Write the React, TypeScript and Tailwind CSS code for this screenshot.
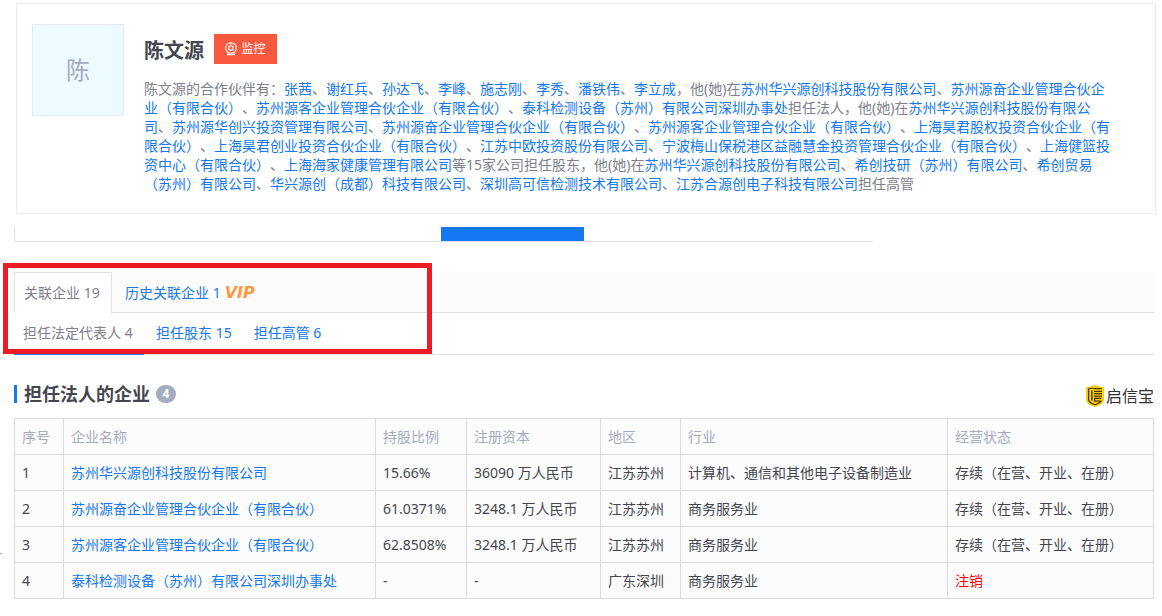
import { Fragment } from 'react';

const partners = ['张茜', '谢红兵', '孙达飞', '李峰', '施志刚', '李秀', '潘铁伟', '李立成'];

const legalCompanies = [
  '苏州华兴源创科技股份有限公司',
  '苏州源奋企业管理合伙企业（有限合伙）',
  '苏州源客企业管理合伙企业（有限合伙）',
  '泰科检测设备（苏州）有限公司深圳办事处',
];

const shareholderCompanies = [
  '苏州华兴源创科技股份有限公司',
  '苏州源华创兴投资管理有限公司',
  '苏州源奋企业管理合伙企业（有限合伙）',
  '苏州源客企业管理合伙企业（有限合伙）',
  '上海昊君股权投资合伙企业（有限合伙）',
  '上海昊君创业投资合伙企业（有限合伙）',
  '江苏中欧投资股份有限公司',
  '宁波梅山保税港区益融慧金投资管理合伙企业（有限合伙）',
  '上海健篮投资中心（有限合伙）',
  '上海海家健康管理有限公司',
];

const executiveCompanies = [
  '苏州华兴源创科技股份有限公司',
  '希创技研（苏州）有限公司',
  '希创贸易（苏州）有限公司',
  '华兴源创（成都）科技有限公司',
  '深圳高可信检测技术有限公司',
  '江苏合源创电子科技有限公司',
];

const columns = [
  { label: '序号', width: 'w-[49px]' },
  { label: '企业名称', width: 'w-[312px]' },
  { label: '持股比例', width: 'w-[91px]' },
  { label: '注册资本', width: 'w-[134px]' },
  { label: '地区', width: 'w-[80px]' },
  { label: '行业', width: 'w-[267px]' },
  { label: '经营状态', width: '' },
];

const rows = [
  { ratio: '15.66%', capital: '36090 万人民币', area: '江苏苏州', industry: '计算机、通信和其他电子设备制造业', status: '存续（在营、开业、在册）' },
  { ratio: '61.0371%', capital: '3248.1 万人民币', area: '江苏苏州', industry: '商务服务业', status: '存续（在营、开业、在册）' },
  { ratio: '62.8508%', capital: '3248.1 万人民币', area: '江苏苏州', industry: '商务服务业', status: '存续（在营、开业、在册）' },
  { ratio: '-', capital: '-', area: '广东深圳', industry: '商务服务业', status: '注销' },
];

function LinkList({ items }: { items: string[] }) {
  return (
    <>
      {items.map((item, i) => (
        <Fragment key={item}>
          {i > 0 && '、'}
          <a href="#" className="text-[#1478f0]">{item}</a>
        </Fragment>
      ))}
    </>
  );
}

function MonitorIcon() {
  return (
    <svg className="h-[14px] w-3" viewBox="0 0 12 14" fill="none" stroke="currentColor" strokeWidth="1.1">
      <circle cx="6" cy="6" r="5.3" />
      <circle cx="6" cy="6" r="2.3" />
      <path d="M6 .8v1.8" />
      <path d="M3.4 10.6 2.6 12.6h6.8l-.8-2" />
    </svg>
  );
}

function ShieldLogo() {
  return (
    <svg className="h-[22px] w-[18px]" viewBox="0 0 18 22" fill="none">
      <path d="M9 0Q13 2 18 2.2V15.5Q18 19 9 22Q0 19 0 15.5V2.2Q5 2 9 0Z" fill="#fccd0a" />
      <path d="M7 3 2.6 4V14.6Q3 17.8 9 19.8Q14.8 17.6 15.4 15.6" stroke="#4a3410" strokeWidth="1.2" />
      <path d="M7.4 3.6H15.8" stroke="#4a3410" strokeWidth="1.2" />
      <path d="M5.8 5.4V15.4" stroke="#4a3410" strokeWidth="1.4" />
      <path d="M8 6.3h8M8 8.7h8M8 11.1h8" stroke="#4a3410" strokeWidth="1.2" />
      <path d="M15.4 13.4H8.6v2.8h6.2" stroke="#4a3410" strokeWidth="1.3" />
    </svg>
  );
}

function ProfileCard() {
  return (
    <section className="mt-[3px] mr-[6px] ml-4 flex items-start gap-5 border border-[#e9eaf2] pt-5 pr-10 pb-5 pl-[15px]">
      <div className="flex size-[92px] shrink-0 items-center justify-center border border-[#e4ebf5] bg-[#ebfbff] text-2xl text-[#a5abbe]">
        陈
      </div>
      <div className="pt-[10px]">
        <div className="flex h-[30px] items-center gap-[10px]">
          <h1 className="pt-1 text-xl leading-7 font-bold text-[#44464f]">陈文源</h1>
          <button type="button" className="flex h-[30px] w-[63px] items-center justify-center gap-1 bg-[#f7583e] text-xs text-white">
            <MonitorIcon />
            监控
          </button>
        </div>
        <p className="mt-[15px] leading-[19px] text-[#7e808c]">
          陈文源的合作伙伴有：
          <LinkList items={partners} />
          ，他(她)在
          <LinkList items={legalCompanies} />
          担任法人，他(她)在
          <LinkList items={shareholderCompanies} />
          等15家公司担任股东，他(她)在
          <LinkList items={executiveCompanies} />
          担任高管
        </p>
      </div>
    </section>
  );
}

function RelationTabs() {
  return (
    <div className="relative mt-[30px]">
      <nav className="flex h-[41px] border-b border-[#dfe1ea] bg-[#fcfcfc]">
        <a href="#" className="-mb-px flex w-[98px] items-center border-t border-r border-l border-[#dfe1ea] bg-white pl-[9px] text-[#7e808c]">
          关联企业 19
        </a>
        <a href="#" className="flex items-center gap-1 pt-px pl-[13px] text-[#1478f0]">
          历史关联企业 1
          <span className="font-['DejaVu_Sans',sans-serif] text-base font-bold text-[#ff9743] italic">VIP</span>
        </a>
      </nav>
      <nav className="flex h-[42px] gap-3 border-b border-[#dfe1ea]">
        <a href="#" className="-mb-px flex w-[130px] items-center border-b-2 border-[#1478f0] pl-[9px] text-[#7e808c]">
          担任法定代表人 4
        </a>
        <a href="#" className="flex items-center pb-px text-[#1478f0]">担任股东 15</a>
        <a href="#" className="ml-[10px] flex items-center pb-px text-[#1478f0]">担任高管 6</a>
      </nav>
      {/* highlight frame */}
      <div className="pointer-events-none absolute -top-[9px] -left-[11px] h-[91px] w-[429px] border-[5px] border-[#ed1c24]" />
    </div>
  );
}

function CompanyTable() {
  return (
    <table className="mt-[10px] w-full table-fixed border-collapse bg-[#fcfcfc] text-left">
      <thead>
        <tr className="h-9">
          {columns.map((col) => (
            <th key={col.label} className={`${col.width} border border-[#dcdcdc] px-[7px] font-normal text-[#a5abbe]`}>
              {col.label}
            </th>
          ))}
        </tr>
      </thead>
      <tbody>
        {rows.map((row, i) => (
          <tr key={legalCompanies[i]} className="h-9 whitespace-nowrap">
            <td className="border border-[#dcdcdc] px-[7px]">{i + 1}</td>
            <td className="border border-[#dcdcdc] px-[7px]">
              <a href="#" className="text-[#1478f0]">{legalCompanies[i]}</a>
            </td>
            <td className="border border-[#dcdcdc] px-[7px]">{row.ratio}</td>
            <td className="border border-[#dcdcdc] px-[7px]">{row.capital}</td>
            <td className="border border-[#dcdcdc] px-[7px]">{row.area}</td>
            <td className="border border-[#dcdcdc] px-[7px]">{row.industry}</td>
            <td className={`border border-[#dcdcdc] px-[7px] ${row.status === '注销' ? 'text-[#ff0000]' : ''}`}>
              {row.status}
            </td>
          </tr>
        ))}
      </tbody>
    </table>
  );
}

export default function App() {
  return (
    <div
      lang="zh-CN"
      className="relative flow-root min-h-screen bg-white font-['Noto_Sans','Noto_Sans_CJK_SC',sans-serif] text-sm text-[#44464f] [text-spacing-trim:space-all]"
    >
      <ProfileCard />
      <main className="mr-2 ml-[14px]">
        {/* main section bar, only the current section is filled */}
        <div className="mt-[13px] flex h-[15px] w-[859px] max-w-full border-b border-l border-[#dfe1ea]">
          <div className="ml-[426px] w-[143px] bg-[#1478f0]" />
        </div>
        <RelationTabs />
        <div className="mt-[25px] flex h-7 items-center justify-between">
          <div className="flex items-center">
            <span className="h-[18px] w-[3px] bg-[#1478f0]" />
            <h2 className="ml-[7px] text-lg leading-7 font-bold">担任法人的企业</h2>
            <span className="ml-[6px] flex h-[18px] w-5 items-center justify-center rounded-full bg-[#a5abbe] text-xs font-bold text-white">
              4
            </span>
          </div>
          <div className="flex items-center gap-[2px] pt-[3px] text-base text-[#333333]">
            <ShieldLogo />
            启信宝
          </div>
        </div>
        <CompanyTable />
      </main>
      <span className="absolute top-[553px] left-0 h-px w-[2px] bg-[#b0b0b0]" />
    </div>
  );
}
